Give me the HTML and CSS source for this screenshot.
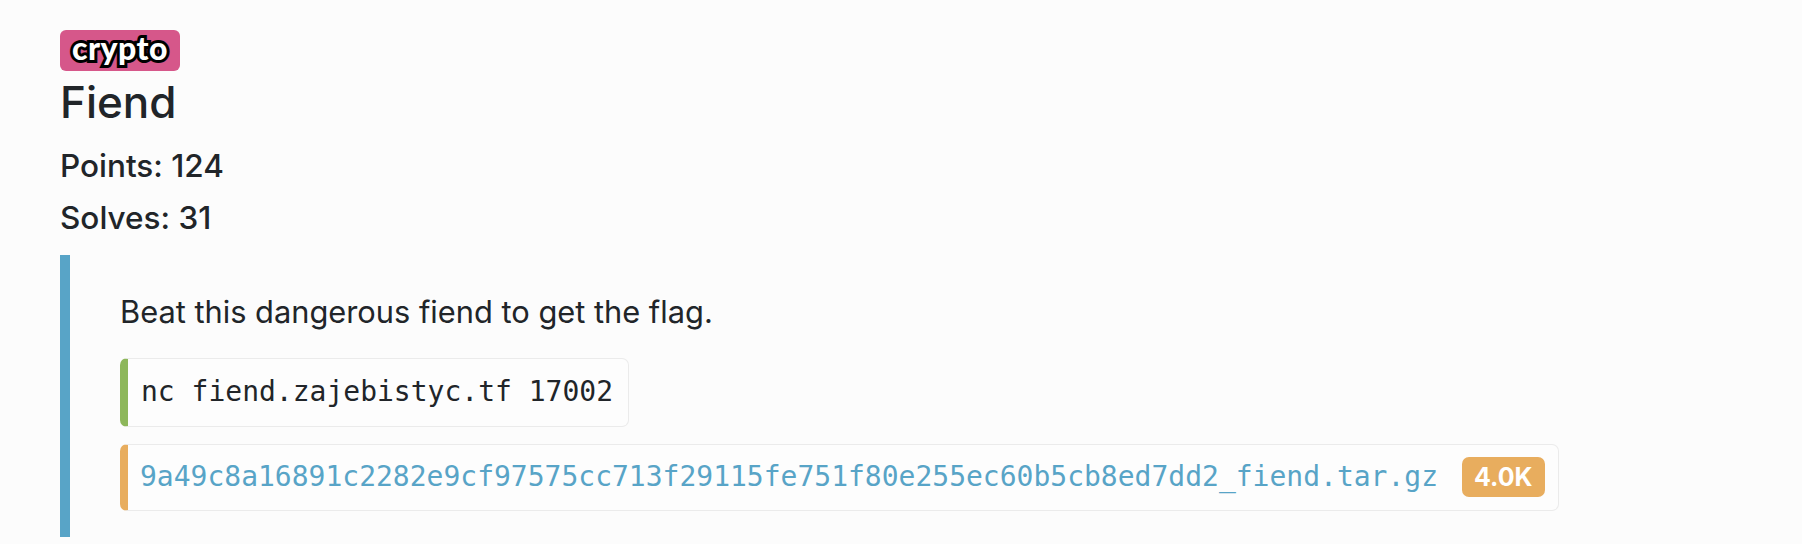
FILE: index.html
```html
<!DOCTYPE html>
<html lang="en">
<head>
<meta charset="utf-8">
<title>Fiend</title>
<link rel="stylesheet" href="styles.css">
</head>
<body>
<main class="challenge">
  <span class="category">crypto</span>
  <h2 class="title">Fiend</h2>
  <div class="stat">Points: 124</div>
  <div class="stat">Solves: 31</div>
  <blockquote class="desc">
    <p class="desc-text">Beat this dangerous fiend to get the flag.</p>
    <div class="box box-nc"><code class="mono">nc fiend.zajebistyc.tf 17002</code></div>
    <div class="box box-file"><a class="mono file-link" href="#">9a49c8a16891c2282e9cf97575cc713f29115fe751f80e255ec60b5cb8ed7dd2_fiend.tar.gz</a><span class="size">4.0K</span></div>
  </blockquote>
</main>
</body>
</html>
```

FILE: styles.css
```css
html, body {
  margin: 0;
  padding: 0;
  background: #fcfcfc;
}
body {
  font-family: Inter, "Noto Sans", "Liberation Sans", sans-serif;
  color: #212529;
}
.challenge {
  padding: 30px 0 0 60px;
}
.category {
  display: inline-block;
  box-sizing: border-box;
  height: 41px;
  width: 120px;
  background: #d6578a;
  border-radius: 6px;
  text-align: center;
  font-family: Lato, "Liberation Sans", sans-serif;
  font-weight: 900;
  font-size: 32px;
  line-height: 36px;
  color: #fff;
  -webkit-text-stroke: 6px #000;
  paint-order: stroke fill;
  letter-spacing: 0.5px;
}
.title {
  margin: 5px 0 19px 0;
  font-size: 44px;
  font-weight: 500;
  line-height: 53px;
}
.stat {
  font-size: 31.5px;
  font-weight: 500;
  line-height: 36px;
  margin-bottom: 15.6px;
}
.desc {
  margin: 19px 0 0 0;
  border-left: 10px solid #58a4c7;
  padding: 39px 0 26px 50px;
}
.desc-text {
  margin: 0 0 28px 0;
  font-size: 30.8px;
  line-height: 36px;
}
.box {
  display: inline-flex;
  align-items: center;
  box-sizing: border-box;
  border: 1px solid #ebebeb;
  border-radius: 7px;
  background: #fdfdfd;
  margin-bottom: 17px;
}
.box:last-child { margin-bottom: 0; }
.box-nc {
  border-left: 8px solid #8db75a;
  height: 69px;
  padding: 0 15px 0 13px;
}
.box-file {
  border-left: 8px solid #e8ad5e;
  height: 67px;
  padding: 0 13px 0 12px;
}
.mono {
  font-family: "DejaVu Sans Mono", "Liberation Mono", monospace;
  font-size: 28px;
  line-height: 40px;
  color: #212529;
}
.file-link {
  color: #58a4c7;
  text-decoration: none;
}
.size {
  margin-left: 24px;
  display: inline-block;
  height: 40px;
  line-height: 40px;
  padding: 0 12px;
  border-radius: 7px;
  background: #e8ad5e;
  color: #fff;
  font-weight: 700;
  font-size: 25px;
}
```
